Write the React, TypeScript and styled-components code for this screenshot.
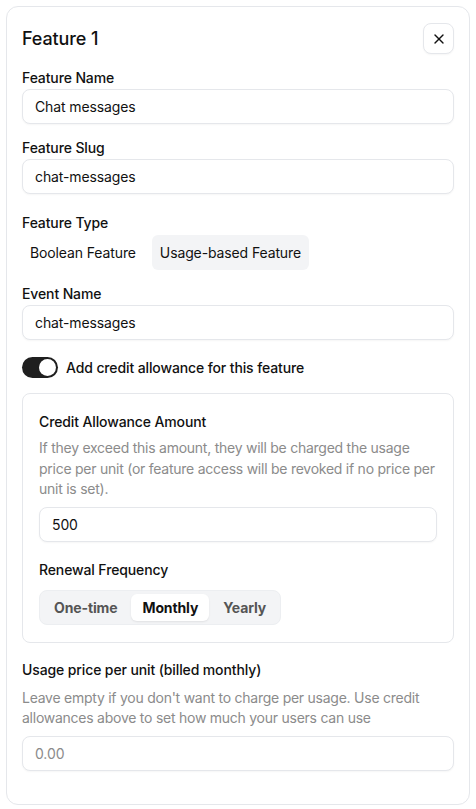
import React from 'react';
import styled, { createGlobalStyle } from 'styled-components';
import { X } from 'lucide-react';

const GlobalStyle = createGlobalStyle`
  body {
    margin: 0;
    background: #fff;
    font-family: Inter, "Noto Sans", sans-serif;
    letter-spacing: -0.12px;
    color: #111;
  }
  button, input {
    letter-spacing: inherit;
  }
`;

const Card = styled.div`
  margin: 6px;
  width: 464px;
  box-sizing: border-box;
  border: 1px solid #e5e7eb;
  border-radius: 12px;
  padding: 16px 15px 33px;
  display: flex;
  flex-direction: column;
`;

const Header = styled.div`
  display: flex;
  justify-content: space-between;
  align-items: center;
  height: 31px;
`;

const Title = styled.h2`
  margin: 0;
  font-size: 18px;
  font-weight: 500;
`;

const CloseButton = styled.button`
  width: 31px;
  height: 31px;
  display: flex;
  align-items: center;
  justify-content: center;
  background: #fff;
  border: 1px solid #e5e7eb;
  border-radius: 8px;
  box-shadow: 0 1px 2px rgba(0, 0, 0, 0.04);
  color: #111;
  padding: 0;
`;

const Field = styled.div<{ $top?: number }>`
  display: flex;
  flex-direction: column;
  margin-top: ${(p) => p.$top ?? 14}px;
`;

const Label = styled.label`
  font-size: 14px;
  font-weight: 500;
  line-height: 20px;
  margin-bottom: 1px;
`;

const Hint = styled.p<{ $top?: number }>`
  margin: ${(p) => p.$top ?? 6}px 0 7px;
  font-size: 14px;
  line-height: 20.5px;
  letter-spacing: -0.25px;
  color: #8b8b8b;
`;

const Input = styled.input`
  box-sizing: border-box;
  width: 100%;
  height: 35px;
  border: 1px solid #e5e7eb;
  border-radius: 8px;
  box-shadow: 0 1px 2px rgba(0, 0, 0, 0.04);
  padding: 0 12px;
  font-family: inherit;
  font-size: 14px;
  color: #111;
  outline: none;
  &::placeholder {
    color: #8b8b8b;
  }
`;

const TypeTabs = styled.div`
  display: flex;
  gap: 8px;
  margin-top: 1px;
`;

const TypeTab = styled.button<{ $active?: boolean }>`
  height: 35px;
  padding: 0 8px;
  border: none;
  border-radius: 6px;
  background: ${(p) => (p.$active ? '#f3f4f6' : 'transparent')};
  font-family: inherit;
  font-size: 14px;
  color: #111;
`;

const ToggleRow = styled.div`
  display: flex;
  align-items: center;
  gap: 8px;
  margin-top: 17px;
  font-size: 14px;
  font-weight: 500;
`;

const Track = styled.span<{ $on: boolean }>`
  width: 36px;
  height: 21px;
  border-radius: 11px;
  background: ${(p) => (p.$on ? '#1f1f1f' : '#e5e7eb')};
  display: flex;
  align-items: center;
  justify-content: ${(p) => (p.$on ? 'flex-end' : 'flex-start')};
  padding: 0 2px;
  box-sizing: border-box;
`;

const Thumb = styled.span`
  width: 17px;
  height: 17px;
  border-radius: 50%;
  background: #fff;
`;

const Panel = styled.div`
  margin-top: 15px;
  border: 1px solid #e5e7eb;
  border-radius: 8px;
  padding: 18px 16px 17px;
  display: flex;
  flex-direction: column;
`;

const Segmented = styled.div`
  display: inline-flex;
  align-self: flex-start;
  gap: 3px;
  padding: 3px;
  margin-top: 9px;
  background: #f3f4f6;
  border: 1px solid #eceef1;
  border-radius: 8px;
`;

const Segment = styled.button<{ $active?: boolean }>`
  height: 27px;
  padding: 0 11px;
  border: none;
  border-radius: 6px;
  background: ${(p) => (p.$active ? '#fff' : 'transparent')};
  box-shadow: ${(p) => (p.$active ? '0 1px 2px rgba(0,0,0,0.08)' : 'none')};
  font-family: inherit;
  font-size: 14px;
  font-weight: 700;
  color: ${(p) => (p.$active ? '#111' : '#555')};
`;

const App = () => {
  return (
    <>
      <GlobalStyle />
      <Card>
        <Header>
          <Title>Feature 1</Title>
          <CloseButton aria-label="Close">
            <X size={16} strokeWidth={2} />
          </CloseButton>
        </Header>

        <Field>
          <Label>Feature Name</Label>
          <Input defaultValue="Chat messages" />
        </Field>

        <Field>
          <Label>Feature Slug</Label>
          <Input defaultValue="chat-messages" />
        </Field>

        <Field $top={19}>
          <Label>Feature Type</Label>
          <TypeTabs>
            <TypeTab>Boolean Feature</TypeTab>
            <TypeTab $active>Usage-based Feature</TypeTab>
          </TypeTabs>
        </Field>

        <Field>
          <Label>Event Name</Label>
          <Input defaultValue="chat-messages" />
        </Field>

        <ToggleRow>
          <Track $on>
            <Thumb />
          </Track>
          Add credit allowance for this feature
        </ToggleRow>

        <Panel>
          <Label>Credit Allowance Amount</Label>
          <Hint $top={5}>
            If they exceed this amount, they will be charged the usage price per unit (or feature
            access will be revoked if no price per unit is set).
          </Hint>
          <Input defaultValue="500" />
          <Field $top={18}>
            <Label>Renewal Frequency</Label>
            <Segmented>
              <Segment>One-time</Segment>
              <Segment $active>Monthly</Segment>
              <Segment>Yearly</Segment>
            </Segmented>
          </Field>
        </Panel>

        <Field $top={17}>
          <Label>Usage price per unit (billed monthly)</Label>
          <Hint $top={7}>
            Leave empty if you don't want to charge per usage. Use credit allowances above to set
            how much your users can use
          </Hint>
          <Input placeholder="0.00" />
        </Field>
      </Card>
    </>
  );
};

export default App;
